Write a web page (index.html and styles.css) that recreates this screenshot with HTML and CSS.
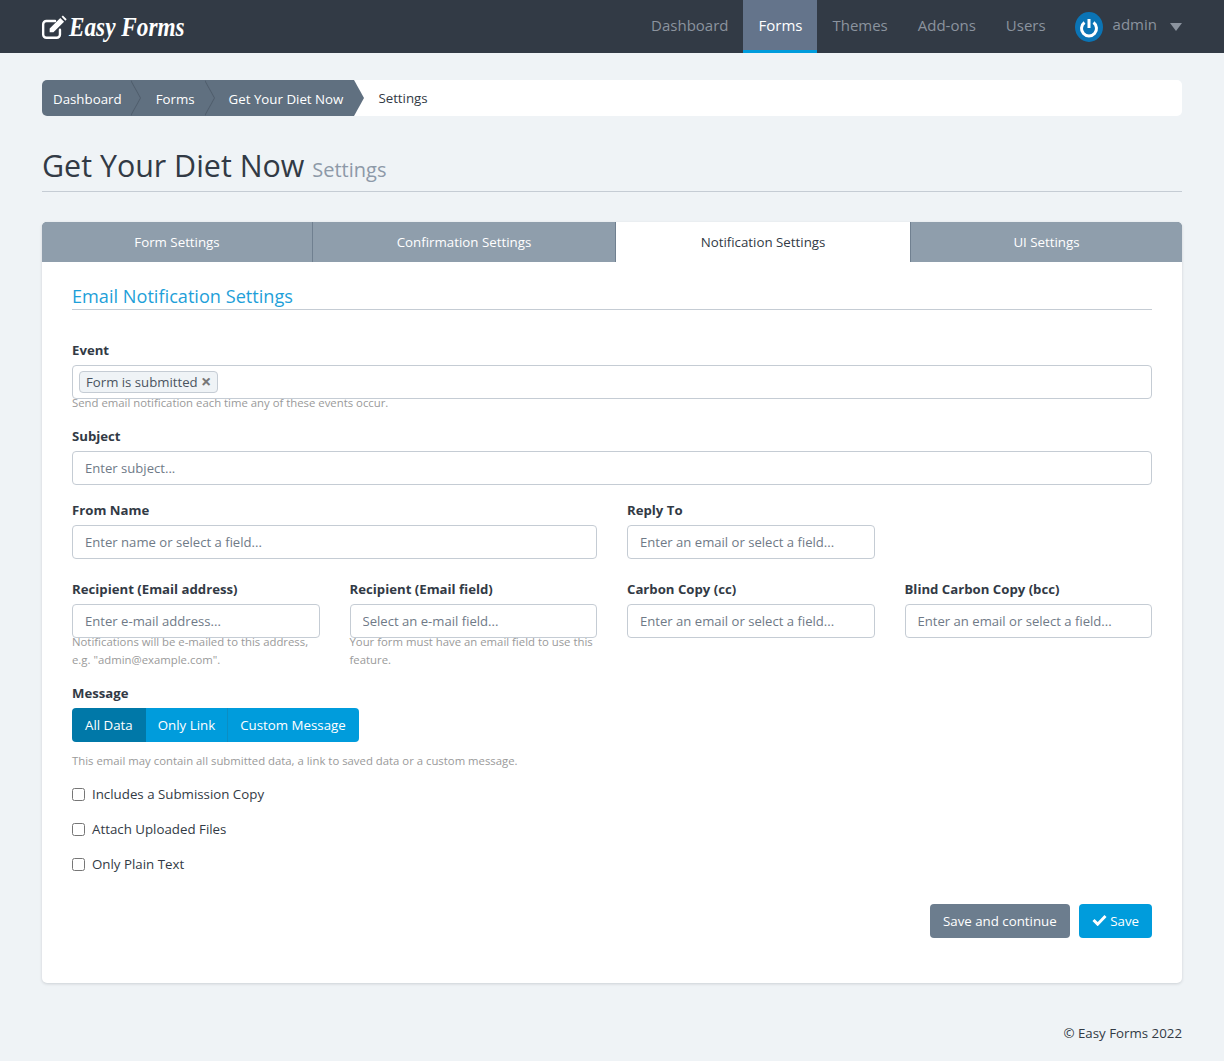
FILE: index.html

```html
<!doctype html>
<html lang="en">
  <head>
    <meta charset="UTF-8" />
    <meta name="viewport" content="width=device-width, initial-scale=1.0" />
    <title>Get Your Diet Now - Settings</title>
    <link rel="stylesheet" href="styles.css">
  </head>
  <body>
    <nav class="navbar">
      <a class="brand" href="#">
        <svg class="brand-icon" viewBox="0 0 24 24" width="26" height="26" aria-hidden="true">
          <path d="M17.500 13.500v4.500a3 3 0 0 1-3 3H5a3 3 0 0 1-3-3V8.500a3 3 0 0 1 3-3h8" fill="none" stroke="#fff" stroke-width="2.200" stroke-linecap="round"/>
          <path d="M8 12.500 17.800 2.700l3.500 3.500L11.500 16H8z M19 1.500l1.200-1 3.500 3.500-1.200 1.200z" fill="#fff"/>
        </svg>
        <span class="brand-text">Easy Forms</span>
      </a>
      <ul class="nav-links">
        <li><a href="#">Dashboard</a></li>
        <li class="active"><a href="#">Forms</a></li>
        <li><a href="#">Themes</a></li>
        <li><a href="#">Add-ons</a></li>
        <li><a href="#">Users</a></li>
      </ul>
      <div class="user-menu">
        <svg class="avatar" viewBox="0 0 28 30" width="28" height="30" aria-hidden="true">
          <ellipse cx="14" cy="15" rx="14" ry="15" fill="#0b74b5"/>
          <path d="M9.500 10.500a7.500 7.500 0 1 0 9 0" fill="none" stroke="#fff" stroke-width="3"/>
          <path d="M14 7v9" stroke="#fff" stroke-width="3"/>
        </svg>
        <span class="user-name">admin</span>
        <span class="caret"></span>
      </div>
    </nav>

    <main class="page">
      <ol class="breadcrumb">
        <li class="crumb crumb-first"><a href="#">Dashboard</a></li>
        <li class="crumb"><a href="#">Forms</a></li>
        <li class="crumb crumb-last"><a href="#">Get Your Diet Now</a></li>
        <li class="crumb-current">Settings</li>
      </ol>

      <h1 class="page-title">Get Your Diet Now <small>Settings</small></h1>

      <section class="card">
        <div class="tabs">
          <a class="tab" href="#">Form Settings</a>
          <a class="tab" href="#">Confirmation Settings</a>
          <a class="tab tab-active" href="#">Notification Settings</a>
          <a class="tab" href="#">UI Settings</a>
        </div>

        <form class="card-body">
          <h2 class="legend">Email Notification Settings</h2>

          <div class="form-group group-event">
            <label>Event</label>
            <div class="form-control tag-input">
              <span class="tag">Form is submitted <span class="tag-remove">×</span></span>
            </div>
            <p class="help">Send email notification each time any of these events occur.</p>
          </div>

          <div class="form-group group-subject">
            <label>Subject</label>
            <input class="form-control" type="text" placeholder="Enter subject...">
          </div>

          <div class="form-row row-from">
            <div class="form-group span-2">
              <label>From Name</label>
              <input class="form-control" type="text" placeholder="Enter name or select a field...">
            </div>
            <div class="form-group">
              <label>Reply To</label>
              <input class="form-control" type="text" placeholder="Enter an email or select a field...">
            </div>
          </div>

          <div class="form-row row-recipient">
            <div class="form-group">
              <label>Recipient (Email address)</label>
              <input class="form-control" type="text" placeholder="Enter e-mail address...">
              <p class="help">Notifications will be e-mailed to this address, e.g. "admin@example.com".</p>
            </div>
            <div class="form-group">
              <label>Recipient (Email field)</label>
              <input class="form-control" type="text" placeholder="Select an e-mail field...">
              <p class="help">Your form must have an email field to use this feature.</p>
            </div>
            <div class="form-group">
              <label>Carbon Copy (cc)</label>
              <input class="form-control" type="text" placeholder="Enter an email or select a field...">
            </div>
            <div class="form-group">
              <label>Blind Carbon Copy (bcc)</label>
              <input class="form-control" type="text" placeholder="Enter an email or select a field...">
            </div>
          </div>

          <div class="form-group group-message">
            <label>Message</label>
            <div class="btn-group">
              <button class="btn btn-primary is-active" type="button">All Data</button>
              <button class="btn btn-primary" type="button">Only Link</button>
              <button class="btn btn-primary" type="button">Custom Message</button>
            </div>
            <p class="help help-spaced">This email may contain all submitted data, a link to saved data or a custom message.</p>
          </div>

          <label class="check"><input type="checkbox"> Includes a Submission Copy</label>
          <label class="check"><input type="checkbox"> Attach Uploaded Files</label>
          <label class="check"><input type="checkbox"> Only Plain Text</label>

          <div class="form-actions">
            <button class="btn btn-secondary" type="button">Save and continue</button>
            <button class="btn btn-primary" type="button">
              <svg viewBox="0 0 16 13" width="15" height="12" aria-hidden="true"><path d="M1.500 6.500 6 11 14.500 2.200" fill="none" stroke="#fff" stroke-width="3.200"/></svg>
              Save
            </button>
          </div>
        </form>
      </section>

      <footer class="footer">© Easy Forms 2022</footer>
    </main>
  </body>
</html>
```

FILE: styles.css

```css
* {
  box-sizing: border-box;
}

body {
  margin: 0;
  background-color: #eff3f6;
  color: #323a45;
  font-family: "Open Sans", "Noto Sans", sans-serif;
  font-size: 13.3px;
  line-height: 20px;
}

a {
  color: inherit;
  text-decoration: none;
}

/* top bar */

.navbar {
  display: flex;
  align-items: stretch;
  height: 53px;
  padding: 0 42px;
  background-color: #323a45;
}

.brand {
  display: flex;
  align-items: center;
  gap: 2px;
  margin-right: auto;
  color: #fff;
}

.brand-icon {
  margin-left: -1px;
  margin-top: 3px;
}

.brand-text {
  display: inline-block;
  font-family: "Liberation Serif", serif;
  font-size: 28px;
  font-style: italic;
  font-weight: 700;
  transform: scaleX(0.83);
  transform-origin: left center;
}

.nav-links {
  display: flex;
  margin: 0;
  padding: 0;
  list-style: none;
}

.nav-links li {
  padding-top: 15px;
  padding-inline: 15px;
  color: #8b939e;
  font-size: 15px;
}

.nav-links li.active {
  background-color: #64748b;
  border-bottom: 3px solid #009cdc;
  color: #fff;
}

.user-menu {
  display: flex;
  align-items: center;
  gap: 10px;
  margin-left: 14px;
  color: #8b939e;
  font-size: 15px;
}

.user-name {
  margin-top: -6px;
}

.caret {
  width: 0;
  height: 0;
  margin-left: 3px;
  border-top: 8px solid #8b939e;
  border-left: 6px solid transparent;
  border-right: 6px solid transparent;
}

/* page */

.page {
  padding: 27px 42px 0;
}

.breadcrumb {
  display: flex;
  height: 36px;
  margin: 0;
  padding: 0;
  border-radius: 5px;
  background-color: #fff;
  list-style: none;
  line-height: 38px;
}

.crumb {
  position: relative;
  padding: 0 9px 0 26px;
  background-color: #607080;
  color: #fff;
}

.crumb-first {
  padding-left: 11px;
  padding-right: 8px;
  border-radius: 5px 0 0 5px;
}

.crumb-last {
  padding-right: 11px;
  padding-left: 25px;
}

.crumb::before,
.crumb::after {
  content: "";
  position: absolute;
  top: 0;
  left: 100%;
  border-top: 18px solid transparent;
  border-bottom: 18px solid transparent;
  border-left: 10px solid #607080;
}

.crumb::before {
  margin-left: 1px;
  border-left-color: #4f5d6b;
  z-index: 1;
}

.crumb::after {
  z-index: 2;
}

.crumb-last::before {
  display: none;
}

.crumb-current {
  padding-left: 24px;
  line-height: 36px;
}

.page-title {
  margin: 28px 0 30px;
  padding-bottom: 3px;
  border-bottom: 1px solid #c5ccd4;
  font-size: 30.400px;
  font-weight: 400;
  line-height: 44px;
}

.page-title small {
  color: #8d99a8;
  font-size: 20px;
  line-height: 1;
}

/* card and tabs */

.card {
  border-radius: 5px;
  background-color: #fff;
  box-shadow: 0 1px 3px rgba(50, 58, 69, 0.18);
}

.tabs {
  display: grid;
  grid-template-columns: 270px 302px 294px 1fr;
  gap: 1px;
  border-radius: 5px 5px 0 0;
  overflow: hidden;
  background-color: #708090;
}

.tab {
  height: 40px;
  background-color: #8f9eac;
  color: #fff;
  line-height: 40px;
  text-align: center;
}

.tab-active {
  background-color: #fff;
  color: #323a45;
}

.card-body {
  padding: 22px 30px 45px;
}

.legend {
  margin: 0 0 30px;
  padding-bottom: 1px;
  border-bottom: 1px solid #c5ccd4;
  color: #1e9fd9;
  font-size: 18.150px;
  font-weight: 400;
  line-height: 24px;
}

/* form */

label {
  display: block;
  margin-bottom: 5px;
  font-size: 13.200px;
  font-weight: 700;
}

.form-control {
  display: block;
  width: 100%;
  height: 34px;
  padding: 6px 12px;
  border: 1px solid #c5ccd4;
  border-radius: 4px;
  background-color: #fff;
  color: #323a45;
  font-family: inherit;
  font-size: 13.100px;
}

.form-control::placeholder {
  color: #6f7a87;
  opacity: 1;
}

.tag-input {
  padding: 5px 6px;
}

.tag {
  display: inline-block;
  height: 22px;
  padding: 0 6px;
  border: 1px solid #c5ccd4;
  border-radius: 4px;
  background-color: #eff3f6;
  color: #4a5460;
  font-size: 13.200px;
  line-height: 20px;
}

.tag-remove {
  color: #777;
  font-size: 18px;
  font-weight: 700;
  line-height: 1;
  vertical-align: -1px;
}

.help {
  margin: -5px 0 0;
  color: #9a9a9a;
  font-size: 11.350px;
  line-height: 18px;
}

.help-spaced {
  margin-top: 10px;
}

.group-event {
  height: 61px;
  margin-bottom: 25px;
}

.group-subject {
  margin-bottom: 15px;
}

.form-row {
  display: grid;
  grid-template-columns: repeat(4, 1fr);
  gap: 30px;
}

.span-2 {
  grid-column: span 2;
}

.row-from {
  margin-bottom: 20px;
}

.row-recipient {
  min-height: 85px;
  margin-bottom: 14px;
}

.group-message {
  margin-bottom: 14px;
}

.btn-group {
  display: flex;
}

.btn {
  height: 34px;
  padding: 0 13px;
  border: none;
  border-radius: 4px;
  color: #fff;
  font-family: inherit;
  font-size: 13.300px;
}

.btn-primary {
  background-color: #009cdc;
}

.btn-secondary {
  background-color: #6c7d8e;
}

.btn-group .btn {
  padding: 0 12px;
  border-radius: 0;
  border-right: 1px solid #0b8ec4;
}

.btn-group .btn:first-child {
  padding: 0 13px;
  border-radius: 4px 0 0 4px;
  border-right: none;
}

.btn-group .btn:last-child {
  padding-right: 13px;
  border-radius: 0 4px 4px 0;
  border-right: none;
}

.btn-group .is-active {
  background-color: #0078a8;
}

.check {
  display: flex;
  align-items: center;
  gap: 7px;
  height: 20px;
  margin-bottom: 15px;
  font-size: 13.300px;
  font-weight: 400;
}

.check input {
  width: 13px;
  height: 13px;
  margin: 0;
}

.form-actions {
  display: flex;
  justify-content: flex-end;
  gap: 9px;
  margin-top: 30px;
}

.footer {
  padding: 40px 0 18px;
  text-align: right;
}
```
